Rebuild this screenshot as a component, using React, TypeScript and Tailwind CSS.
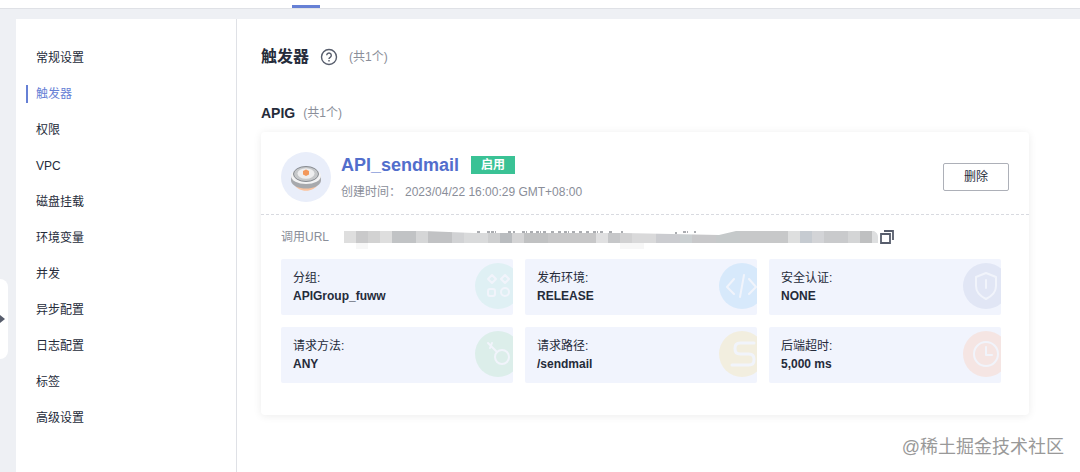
import type { ReactNode } from "react";

interface Tile {
    label: string;
    value: string;
    color: string;
    glyph: ReactNode;
}

const menu = [
    "常规设置",
    "触发器",
    "权限",
    "VPC",
    "磁盘挂载",
    "环境变量",
    "并发",
    "异步配置",
    "日志配置",
    "标签",
    "高级设置",
];

const tiles: Tile[] = [
    {
        label: "分组:",
        value: "APIGroup_fuww",
        color: "#dff0f4",
        glyph: (
            <>
                <path d="M17 16l4 4-4 4-4-4z" />
                <path d="M30 16l4 4-4 4-4-4z" />
                <rect x="13" y="30" width="7" height="7" rx="2" />
                <circle cx="30" cy="33" r="4" />
            </>
        ),
    },
    {
        label: "发布环境:",
        value: "RELEASE",
        color: "#d7e9fb",
        glyph: <path d="M15 20l-7 8 7 7M25 16l-4 22M30 20l7 8-7 7" />,
    },
    {
        label: "安全认证:",
        value: "NONE",
        color: "#e1e6f5",
        glyph: <path d="M23 14l10 4v9c0 6-4 10-10 13-6-3-10-7-10-13v-9zM23 21v8" />,
    },
    {
        label: "请求方法:",
        value: "ANY",
        color: "#dceeea",
        glyph: (
            <>
                <circle cx="27" cy="30" r="7" />
                <path d="M13 16l9 9M17 16l-2 5" />
            </>
        ),
    },
    {
        label: "请求路径:",
        value: "/sendmail",
        color: "#f2eedf",
        glyph: <path d="M35 16H21q-5 0-5 5v1q0 5 5 5h9q5 0 5 5v1q0 5-5 5H13" strokeWidth="3" />,
    },
    {
        label: "后端超时:",
        value: "5,000 ms",
        color: "#f5e5e3",
        glyph: (
            <>
                <circle cx="23" cy="27" r="12" />
                <path d="M23 20v8h6" />
            </>
        ),
    },
];

// masked part of the url, [start, width, colour]
const mosaic: [number, number, string][] = [
    [0, 12, "#dedede"],
    [12, 12, "#c9c9ca"],
    [24, 12, "#d2d2d2"],
    [36, 12, "#dedede"],
    [48, 24, "#c1c3c5"],
    [72, 12, "#d5d6d7"],
    [84, 24, "#c1c2c4"],
    [108, 12, "#d1d2d4"],
    [120, 24, "#d9dadb"],
    [144, 12, "#cecfd0"],
    [156, 12, "#b9bcbf"],
    [168, 12, "#d4d4d5"],
    [180, 24, "#c0c1c2"],
    [204, 48, "#c7c7c8"],
    [252, 12, "#e0e0e1"],
    [264, 12, "#c6c7c9"],
    [276, 12, "#d1d1d2"],
    [288, 24, "#d9d9da"],
    [312, 24, "#cbccd0"],
    [336, 12, "#cbd0d2"],
    [348, 24, "#c8c8ca"],
    [372, 24, "#c5c9ca"],
    [396, 48, "#c7c8c9"],
    [444, 12, "#dedfdf"],
    [456, 12, "#c6cbd1"],
    [468, 12, "#d3d4d7"],
    [480, 24, "#c9cacc"],
    [504, 12, "#d4d5d6"],
    [516, 12, "#bfc0c1"],
    [528, 6, "#dedfe0"],
];

const HelpIcon = () => (
    <svg width="18" height="18" viewBox="0 0 18 18" fill="none" stroke="#575d6c" strokeWidth="1.4">
        <circle cx="9" cy="9" r="7.5" />
        <path d="M6.7 7.3a2.3 2.3 0 1 1 3.5 2c-.8.5-1.2.9-1.2 1.8" />
        <path d="M9 12.1v1.5" />
    </svg>
);

const CopyIcon = () => (
    <svg width="14" height="14" viewBox="0 0 14 14" fill="none" stroke="#575d6c" strokeWidth="1.8">
        <path d="M1 4h9v9H1z" />
        <path d="M4 1h9v9" />
    </svg>
);

const TriggerIcon = () => (
    <svg className="shrink-0" width="50" height="50" viewBox="0 0 50 50">
        <circle cx="25" cy="25" r="25" fill="#e9eefa" />
        <path d="M13 32c4 9 20 9 24 0z" fill="#fac39f" />
        <path d="M10 24v5c2 10 28 10 30 0v-5z" fill="#a7a9ad" />
        <ellipse cx="25" cy="24" rx="15" ry="8" fill="#f3f3f4" />
        <ellipse cx="25" cy="22" rx="12.5" ry="7.5" fill="#c6c8ca" stroke="#868a90" />
        <ellipse cx="25" cy="21.5" rx="8.5" ry="5.2" fill="#eeeeef" />
        <path d="M22 19l3-1.5 3 1.5v3.5l-3 1.5-3-1.5z" fill="#f3985b" />
    </svg>
);

const MaskedUrl = () => (
    <svg width="534" height="28" viewBox="0 0 534 28" className="min-w-0">
        <clipPath id="stroke">
            <path d="M0 8H80l50 2h150l95 2L392 8H530q4 2 4 6v6H0z" />
        </clipPath>
        <path d="M12 20h12v6H12zM276 20h24v6h-24z" fill="#f7f7f7" />
        <g clipPath="url(#stroke)">
            {mosaic.map(([x, w, fill]) => (
                <rect key={x} x={x} y="8" width={w} height="12" fill={fill} />
            ))}
        </g>
        <path
            d="M133 9h4M143 9h3M147 9h5M164 9h3M169 9h2M178 9h5M186 9h4M192 9h5M199 9h3M207 9h4M214 9h4M220 9h5M228 9h4M235 9h4M242 9h4M249 9h5M256 9h3M265 9h3M277 9h2M331 10h2M339 9h5M350 9h2"
            stroke="#565a62"
            strokeDasharray="3 1"
        />
    </svg>
);

export default function App() {
    return (
        <div className="relative flex min-h-screen flex-col overflow-hidden bg-[#eef0f4] font-['Liberation_Sans','Noto_Sans_CJK_SC',sans-serif] text-xs leading-[18px] text-[#252b3a]">
            {/* TOP BAR */}
            <header className="flex h-[9px] items-end border-b border-[#dfe1e6] bg-white pl-[292px]">
                <div className="h-[3px] w-7 bg-[#6680d5]" />
            </header>

            <div className="flex grow pt-[10px] pl-4">
                {/* SIDE MENU */}
                <nav className="w-[221px] shrink-0 border-r border-[#dfe1e6] bg-white pt-[21px]">
                    <ul>
                        {menu.map((name) => (
                            <li key={name} className="flex h-9 items-center pl-[10px]">
                                <a
                                    href="#"
                                    className={
                                        name === "触发器"
                                            ? "border-l-2 border-[#6680d5] pl-2 text-[#6680d5]"
                                            : "border-l-2 border-transparent pl-2"
                                    }
                                >
                                    {name}
                                </a>
                            </li>
                        ))}
                    </ul>
                </nav>

                <main className="min-w-0 grow bg-white pt-[26px] pr-[51px] pl-6">
                    <div className="flex items-center">
                        <h1 className="text-base leading-6 font-bold">触发器</h1>
                        <button aria-label="帮助" className="ml-[11px]">
                            <HelpIcon />
                        </button>
                        <span className="ml-[11px] text-[#8a8e99]">(共1个)</span>
                    </div>

                    <div className="mt-8 flex items-center">
                        <h2 className="text-sm leading-6 font-bold">APIG</h2>
                        <span className="ml-2 text-[#8a8e99]">(共1个)</span>
                    </div>

                    {/* TRIGGER CARD */}
                    <section className="mt-[7px] rounded-sm pb-8 shadow-[0_1px_8px_rgba(0,0,0,0.08)]">
                        <div className="flex items-center border-b border-dashed border-[#d8dae0] px-5 pt-5 pb-3">
                            <TriggerIcon />
                            <div className="ml-[10px] grow">
                                <div className="flex items-center">
                                    <h3 className="text-lg leading-6 font-bold text-[#526ecc]">API_sendmail</h3>
                                    <span className="ml-3 bg-[#3ac295] px-[10px] font-bold text-white">启用</span>
                                </div>
                                <p className="mt-1.5 text-[#8a8e99]">
                                    创建时间：<span className="ml-1">2023/04/22 16:00:29 GMT+08:00</span>
                                </p>
                            </div>
                            <button className="rounded-xs border border-[#adb0b8] px-5 py-1">删除</button>
                        </div>

                        <div className="flex items-center px-5 py-2">
                            <span className="shrink-0 text-[#8a8e99]">调用URL</span>
                            <div className="ml-[15px] min-w-0">
                                <MaskedUrl />
                            </div>
                            <button aria-label="复制" className="ml-0.5 shrink-0">
                                <CopyIcon />
                            </button>
                        </div>

                        <div className="grid grid-cols-3 gap-3 pr-7 pl-5">
                            {tiles.map((tile) => (
                                <div
                                    key={tile.label}
                                    className="flex h-14 justify-between overflow-hidden rounded-xs bg-[#f1f4fd]"
                                >
                                    <dl className="py-[10px] pl-3">
                                        <dt>{tile.label}</dt>
                                        <dd className="font-bold">{tile.value}</dd>
                                    </dl>
                                    <svg width="38" height="56" viewBox="0 0 38 56" fill="none">
                                        <circle cx="23" cy="27" r="23" fill={tile.color} />
                                        <g stroke="#f1f4fb" strokeWidth="2" strokeLinecap="round" strokeLinejoin="round">
                                            {tile.glyph}
                                        </g>
                                    </svg>
                                </div>
                            ))}
                        </div>
                    </section>
                </main>
            </div>

            {/* collapse handle */}
            <button
                aria-label="展开"
                className="absolute top-[279px] left-0 flex h-20 w-2 items-center rounded-r-lg bg-white"
            >
                <svg width="5" height="8" viewBox="0 0 5 8">
                    <path d="M0 0l5 4-5 4z" fill="#575d6c" />
                </svg>
            </button>

            <p className="absolute right-4 bottom-[11px] text-lg leading-7 text-[#999]">@稀土掘金技术社区</p>
        </div>
    );
}
